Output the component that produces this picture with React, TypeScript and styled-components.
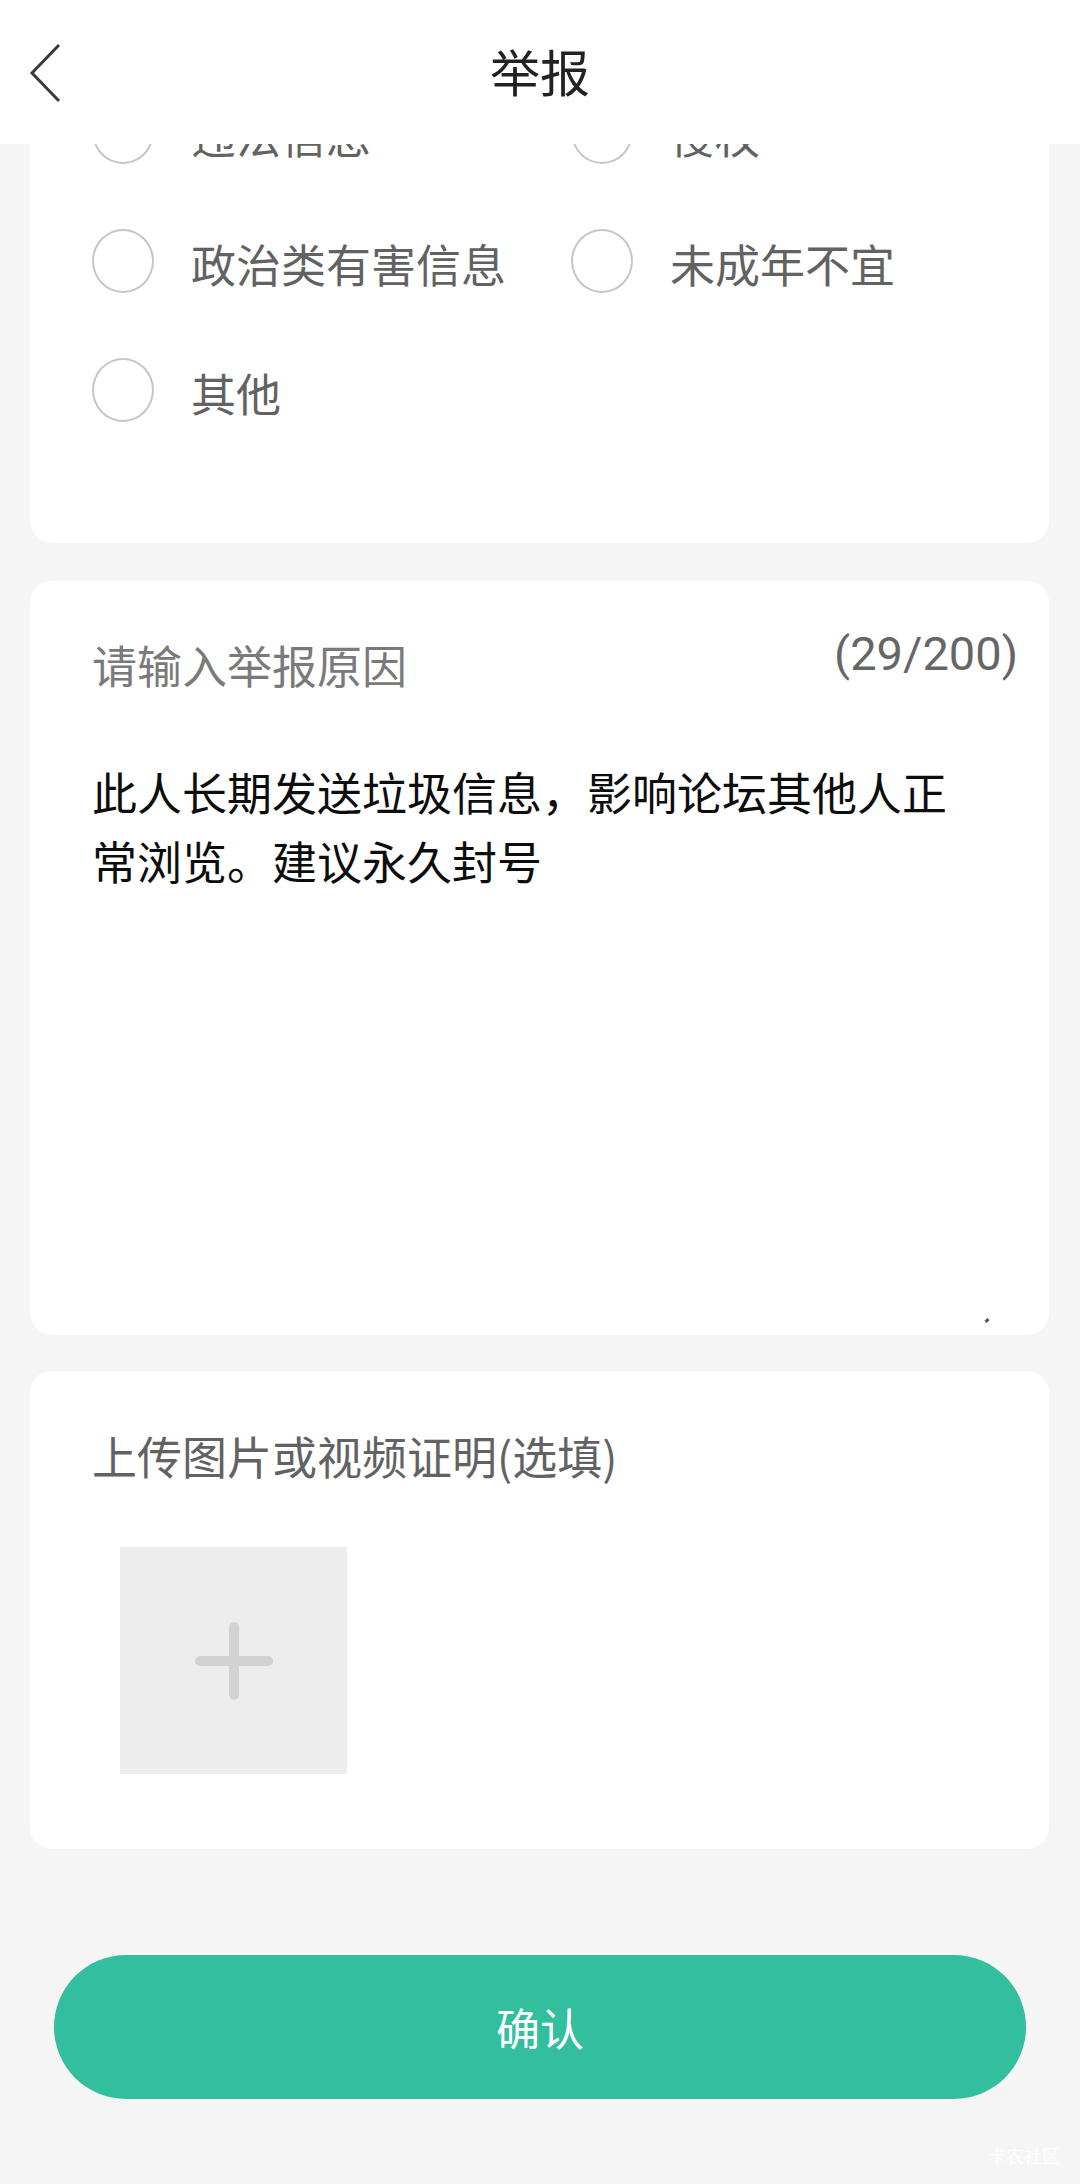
import React from "react";
import styled, { createGlobalStyle } from "styled-components";

const GlobalStyle = createGlobalStyle`
  html, body {
    margin: 0;
    padding: 0;
    background: #f5f5f5;
    font-family: "Noto Sans CJK SC", "Noto Sans", sans-serif;
  }
`;

const reasons: [string, string?][] = [
  ["违法信息", "侵权"],
  ["政治类有害信息", "未成年不宜"],
  ["其他"],
];

const App = () => {
  return (
    <>
      <GlobalStyle />
      <Page>
        <Header>
          <BackButton aria-label="返回">
            <svg width="34" height="60" viewBox="0 0 34 60" fill="none">
              <polyline
                points="30,2 3,30 30,58"
                stroke="#3a3a3a"
                strokeWidth="3"
                strokeLinejoin="miter"
              />
            </svg>
          </BackButton>
          <Title>举报</Title>
        </Header>

        <Content>
          <ReasonCard>
            {reasons.map((row, i) => (
              <RadioRow key={i}>
                {row.map((label) =>
                  label ? (
                    <RadioItem key={label}>
                      <Circle />
                      <RadioLabel>{label}</RadioLabel>
                    </RadioItem>
                  ) : null
                )}
              </RadioRow>
            ))}
          </ReasonCard>

          <InputCard>
            <InputHead>
              <Placeholder>请输入举报原因</Placeholder>
              <Counter>(29/200)</Counter>
            </InputHead>
            <Body>此人长期发送垃圾信息，影响论坛其他人正常浏览。建议永久封号</Body>
            <Grip />
          </InputCard>

          <UploadCard>
            <UploadLabel>上传图片或视频证明(选填)</UploadLabel>
            <UploadBox>
              <svg width="80" height="80" viewBox="0 0 80 80">
                <path
                  d="M40 6 V74 M6 40 H74"
                  stroke="#d2d2d2"
                  strokeWidth="10"
                  strokeLinecap="round"
                />
              </svg>
            </UploadBox>
          </UploadCard>

          <ConfirmButton>确认</ConfirmButton>
        </Content>
        <Watermark>卡农社区</Watermark>
      </Page>
    </>
  );
};

export default App;

const Page = styled.div`
  position: relative;
  display: flex;
  flex-direction: column;
  min-height: 2184px;
  overflow: hidden;
  background: #f5f5f5;
`;

const Header = styled.header`
  position: fixed;
  top: 0;
  left: 0;
  right: 0;
  height: 144px;
  background: #fff;
  display: flex;
  align-items: center;
  justify-content: center;
  z-index: 10;
`;

const BackButton = styled.div`
  position: absolute;
  left: 29px;
  top: 43px;
  display: flex;
`;

const Title = styled.h1`
  margin: 0;
  font-size: 50px;
  font-weight: 400;
  color: #222;
  line-height: 1;
  padding-bottom: 4px;
`;

const Content = styled.main`
  display: flex;
  flex-direction: column;
  padding: 0 31px 0 30px;
`;

const Card = styled.section`
  background: #fff;
  border-radius: 22px;
  position: relative;
`;

const ReasonCard = styled(Card)`
  margin-top: -40px;
  padding: 107px 0 89px;
`;

const RadioRow = styled.div`
  display: grid;
  grid-template-columns: 479px 1fr;
  height: 129px;
  align-items: center;
  padding-left: 62px;
`;

const RadioItem = styled.div`
  display: flex;
  align-items: center;
`;

const Circle = styled.span`
  width: 62px;
  height: 64px;
  box-sizing: border-box;
  border: 2.5px solid #c6c6c6;
  border-radius: 50%;
  margin-right: 37px;
  flex-shrink: 0;
`;

const RadioLabel = styled.span`
  font-size: 45px;
  color: #626262;
  line-height: 1;
  margin-top: 6px;
`;

const InputCard = styled(Card)`
  margin-top: 38px;
  height: 754px;
  box-sizing: border-box;
  padding: 43px 31px 0 62px;
`;

const InputHead = styled.div`
  display: flex;
  justify-content: space-between;
  align-items: flex-start;
`;

const Placeholder = styled.div`
  font-size: 45px;
  line-height: 60px;
  color: #7a7a7a;
  margin-top: 11px;
`;

const Counter = styled.div`
  font-family: Roboto, "Noto Sans", sans-serif;
  font-size: 47px;
  line-height: 60px;
  color: #666;
`;

const Body = styled.div`
  margin-top: 62px;
  padding-right: 50px;
  font-size: 45px;
  line-height: 69px;
  color: #0d0d0d;
`;

const Grip = styled.span`
  position: absolute;
  right: 60px;
  bottom: 13px;
  width: 4px;
  height: 3px;
  background: #555;
  transform: rotate(-40deg);
`;

const UploadCard = styled(Card)`
  margin-top: 36px;
  padding: 55px 0 75px 62px;
`;

const UploadLabel = styled.div`
  font-size: 45px;
  line-height: 60px;
  color: #626262;
`;

const UploadBox = styled.div`
  margin: 61px 0 0 28px;
  width: 227px;
  height: 227px;
  background: #ededed;
  display: flex;
  align-items: center;
  justify-content: center;
`;

const ConfirmButton = styled.button`
  margin: 106px 23px 0 24px;
  height: 144px;
  border: none;
  border-radius: 72px;
  background: #33be9e;
  color: #fff;
  font-family: "Noto Sans CJK SC", sans-serif;
  font-size: 44px;
  padding: 0;
`;

const Watermark = styled.div`
  position: absolute;
  right: 20px;
  bottom: 16px;
  font-size: 18px;
  color: rgba(255, 255, 255, 0.9);
`;
